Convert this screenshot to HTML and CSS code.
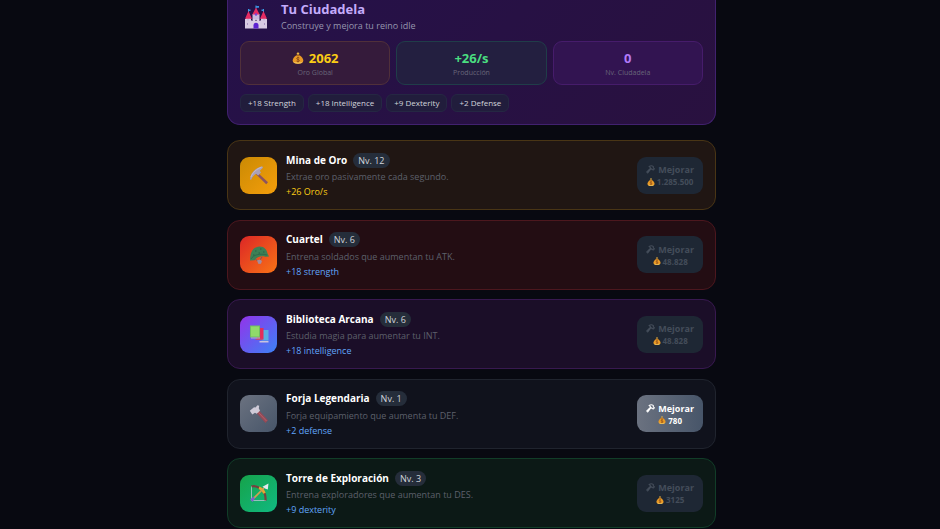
FILE: index.html
```html
<!DOCTYPE html>
<html lang="es">
<head>
<meta charset="utf-8">
<meta name="viewport" content="width=device-width, initial-scale=1">
<title>Tu Ciudadela</title>
<link rel="stylesheet" href="styles.css">
</head>
<body>
<svg class="defs" aria-hidden="true">
  <symbol id="bag" viewBox="0 0 12 12">
    <path d="M4.600 1.200 6 .2l1.400 1-.5 1.600H5.100z" fill="#e9b544"/>
    <path d="M4.700 3h2.600C9.500 4.300 11.300 6.500 11.300 8.600 11.300 10.800 9.500 11.800 6 11.800S.7 10.800.7 8.600C.7 6.500 2.500 4.300 4.700 3z" fill="#e99a26"/>
    <path d="M1.200 9.600c1.800 1.200 7.800 1.200 9.600 0-.7 1.600-2.400 2.200-4.800 2.200s-4.100-.6-4.800-2.200z" fill="#f3c75c"/>
    <path d="M4 3.300h4" stroke="#9c5a1b" stroke-width="1"/>
    <path d="M7.400 6C6.800 5.300 4.800 5.300 4.700 6.500c0 1.200 2.700.8 2.700 2.100 0 1.200-2.200 1.200-2.900.4M6 4.700v5.600" fill="none" stroke="#8a4a19" stroke-width=".9"/>
  </symbol>
  <symbol id="tools" viewBox="0 0 10 10">
    <path d="M3.500 1.500C5 .6 6.800.6 8 1.500l.2 1.800 1.100 1L7.900 5.700 6.300 4.300 5.300 4.500 4.800 2.800zM5.300 4.300 1.900 8.800.8 7.800l3.700-3.700" fill="none" stroke="currentColor" stroke-width="1.200"/>
  </symbol>
</svg>
<main class="page">
  <header class="hero">
    <div class="hero-head">
      <svg class="castle" viewBox="0 0 24 24" aria-hidden="true">
        <path d="M12 .5v3M4.500 4v3M19.500 4v3" stroke="#39a9e8" stroke-width="1"/>
        <path d="M12 1h3v1.800h-3zM4.500 4.500h2v1.500h-2zM17.500 4.500h2v1.500h-2z" fill="#3b8fe0"/>
        <path d="M8.500 9h7v6h-7zM2 12.500h5V16H2zM17 12.500h5V16h-5z" fill="#c9b8dc"/>
        <path d="M12 2.500 15.700 9.500H8.300zM4.500 6 8 13.800H1zM19.500 6 23 13.800h-7z" fill="#e52b62"/>
        <path d="M1 14h2v1.500h2V14h2v1.500h2V14h2v1.500h2V14h2v1.500h2V14h2v1.500h2V14h2v9.500H1z" fill="#d8cbe3"/>
        <path d="M9.500 23.500v-3.200a2.500 2.500 0 0 1 5 0v3.200z" fill="#5c22cf"/>
        <circle cx="12" cy="9.500" r="1.200" fill="#7a42d8"/>
        <path d="M3.500 18v2M20.500 18v2" stroke="#a994c2"/>
      </svg>
      <div>
        <h1 class="hero-title">Tu Ciudadela</h1>
        <p class="hero-sub">Construye y mejora tu reino idle</p>
      </div>
    </div>
    <div class="stats">
      <div class="stat stat-gold">
        <strong class="stat-value"><svg class="bag-lg" aria-hidden="true"><use href="#bag"/></svg>2062</strong>
        <span class="stat-label">Oro Global</span>
      </div>
      <div class="stat stat-green">
        <strong class="stat-value">+26/s</strong>
        <span class="stat-label">Producción</span>
      </div>
      <div class="stat stat-purple">
        <strong class="stat-value">0</strong>
        <span class="stat-label">Nv. Ciudadela</span>
      </div>
    </div>
    <ul class="chips">
      <li class="chip">+18 Strength</li>
      <li class="chip">+18 Intelligence</li>
      <li class="chip">+9 Dexterity</li>
      <li class="chip">+2 Defense</li>
    </ul>
  </header>

  <section class="buildings" aria-label="Edificios">
    <article class="card mine">
      <div class="tile">
        <svg class="glyph" viewBox="0 0 20 20" aria-hidden="true">
          <path d="M8.500 7.500 19 17.300 17.200 19.200 7 9.200z" fill="#8c5360"/>
          <path d="M1 14.500C1.200 9 5.500 3.200 13.200 1.200L14 2.700 10.800 5.800 12 7.600 9.200 10.400 7 8.800C4.800 10.200 3.300 12 2.200 14.800z" fill="#aaa0b8"/>
          <path d="M2 12C3.500 7.500 7.500 4 12.500 2.300" fill="none" stroke="#c8c0d2" stroke-width=".8"/>
        </svg>
      </div>
      <div class="info">
        <div class="name-row"><h2 class="name">Mina de Oro</h2><span class="level">Nv. 12</span></div>
        <p class="desc">Extrae oro pasivamente cada segundo.</p>
        <p class="bonus">+26 Oro/s</p>
      </div>
      <button class="upgrade" type="button" disabled>
        <span class="action"><svg class="tools" aria-hidden="true"><use href="#tools"/></svg>Mejorar</span>
        <span class="price"><svg class="bag" aria-hidden="true"><use href="#bag"/></svg>1.285.500</span>
      </button>
    </article>

    <article class="card barracks">
      <div class="tile">
        <svg class="glyph" viewBox="0 0 20 20" aria-hidden="true">
          <path d="M6 13.500 9 16.500M13 12l-3 4.500" stroke="#6f5b62" stroke-width="1"/>
          <path d="M8 15.500l3-1 2 1.500-1 2.700-2.500.3z" fill="#a58b9b"/>
          <path d="M1 15.500C1 7 4 2 10.500 1.500 15.500 1.500 18 5 18.500 8.500L20 11.500 16.500 11.800C12 10.500 8 12 5.500 15.200z" fill="#3d8055"/>
          <path d="M2 14C4 10 11 8 18 10" fill="none" stroke="#29624a" stroke-width=".7"/>
          <path d="M6 5.500h1.500v1H6zM11 3.500h1.500v1H11zM4 9.500h1.500v1H4zM14 6.500h1.500v1H14zM9.500 7.500H11v1H9.500z" fill="#286047"/>
        </svg>
      </div>
      <div class="info">
        <div class="name-row"><h2 class="name">Cuartel</h2><span class="level">Nv. 6</span></div>
        <p class="desc">Entrena soldados que aumentan tu ATK.</p>
        <p class="bonus">+18 strength</p>
      </div>
      <button class="upgrade" type="button" disabled>
        <span class="action"><svg class="tools" aria-hidden="true"><use href="#tools"/></svg>Mejorar</span>
        <span class="price"><svg class="bag" aria-hidden="true"><use href="#bag"/></svg>48.828</span>
      </button>
    </article>

    <article class="card library">
      <div class="tile">
        <svg class="glyph" viewBox="0 0 20 20" aria-hidden="true">
          <path d="M12.500 6h7v10.500h-7z" fill="#59aee0"/>
          <path d="M10.500 17h9v1.500h-9z" fill="#c9c3df"/>
          <path d="M8 4h6.500v11.500H8z" fill="#e32d59"/>
          <path d="M6.500 14.500h7v1.500h-7z" fill="#bd4a77"/>
          <path d="M1 1.500h10v12H1z" fill="#71bd60"/>
          <path d="M2 2.500h8v10H2z" fill="#90da69"/>
          <path d="M2 13.500h9v1H2z" fill="#b5b2c9"/>
        </svg>
      </div>
      <div class="info">
        <div class="name-row"><h2 class="name">Biblioteca Arcana</h2><span class="level">Nv. 6</span></div>
        <p class="desc">Estudia magia para aumentar tu INT.</p>
        <p class="bonus">+18 intelligence</p>
      </div>
      <button class="upgrade" type="button" disabled>
        <span class="action"><svg class="tools" aria-hidden="true"><use href="#tools"/></svg>Mejorar</span>
        <span class="price"><svg class="bag" aria-hidden="true"><use href="#bag"/></svg>48.828</span>
      </button>
    </article>

    <article class="card forge">
      <div class="tile">
        <svg class="glyph" viewBox="0 0 20 20" aria-hidden="true">
          <path d="M7 8.500 9.500 6 19 16.200 16.500 19z" fill="#954956"/>
          <path d="M9 8 17.500 17" stroke="#b86a70" stroke-width=".8"/>
          <path d="M.8 6.800 5 3.200 6.500 3.500 8.500 1.200 10.200 1.800 9.800 4.200 11 6.700 7.700 9.700 6 8.700 3.300 10.500z" fill="#cfcbd8"/>
        </svg>
      </div>
      <div class="info">
        <div class="name-row"><h2 class="name">Forja Legendaria</h2><span class="level">Nv. 1</span></div>
        <p class="desc">Forja equipamiento que aumenta tu DEF.</p>
        <p class="bonus">+2 defense</p>
      </div>
      <button class="upgrade" type="button">
        <span class="action"><svg class="tools" aria-hidden="true"><use href="#tools"/></svg>Mejorar</span>
        <span class="price"><svg class="bag" aria-hidden="true"><use href="#bag"/></svg>780</span>
      </button>
    </article>

    <article class="card tower">
      <div class="tile">
        <svg class="glyph" viewBox="0 0 20 20" aria-hidden="true">
          <path d="M2.500 3v14.500H17" fill="none" stroke="#b5c6cf" stroke-width=".8"/>
          <path d="M2.500 3.500C6 2 9 4 11.500 5.500 15 8 17 12 16.500 17.500" fill="none" stroke="#77403e" stroke-width="2.200"/>
          <path d="M10 4.800c2.500.8 4.500 3 5.500 5.400" fill="none" stroke="#e3a833" stroke-width="2.500"/>
          <path d="M3 17 15 5" stroke="#d3a052" stroke-width="1.700"/>
          <path d="M19.500.5 18.800 6.500 16.500 5.800 13.500 3.800z" fill="#e4e8ee"/>
          <path d="M1 16.500 4.500 13.500 6 15.500 3.500 19z" fill="#7b63c8"/>
        </svg>
      </div>
      <div class="info">
        <div class="name-row"><h2 class="name">Torre de Exploración</h2><span class="level">Nv. 3</span></div>
        <p class="desc">Entrena exploradores que aumentan tu DES.</p>
        <p class="bonus">+9 dexterity</p>
      </div>
      <button class="upgrade" type="button" disabled>
        <span class="action"><svg class="tools" aria-hidden="true"><use href="#tools"/></svg>Mejorar</span>
        <span class="price"><svg class="bag" aria-hidden="true"><use href="#bag"/></svg>3125</span>
      </button>
    </article>
  </section>
</main>
</body>
</html>
```
FILE: styles.css
```css
* { box-sizing: border-box; }
body {
  margin: 0;
  padding-left: 3px;
  background: #080911;
  color: #fff;
  font-family: "Open Sans", "Noto Sans", sans-serif;
  font-size: 9px;
  line-height: 15px;
}
h1, h2, p, ul { margin: 0; padding: 0; }
.defs { display: none; }
.page {
  display: flex;
  flex-direction: column;
  gap: 15px;
  width: 100%;
  max-width: 489px;
  min-height: 100vh;
  margin: 0 auto;
  padding-bottom: 1px;
}
.hero {
  padding: 0 12px 12px;
  border: 1px solid #41216f;
  border-top: 0;
  border-radius: 0 0 13px 13px;
  background: linear-gradient(135deg, #251149, #29113f);
}
.hero-head { display: flex; align-items: center; gap: 13px; height: 33px; padding-left: 4px; }
.castle { display: block; width: 24px; height: 24px; }
.hero-title { font-size: 13px; line-height: 18px; font-weight: 700; color: #c4abfb; }
.hero-sub { font-size: 9px; line-height: 15px; color: #9696ae; }
.stats { display: grid; grid-template-columns: repeat(3, 1fr); gap: 6px; margin-top: 8px; }
.stat {
  display: flex;
  flex-direction: column;
  align-items: center;
  padding: 7px 6px 5px;
  border: 1px solid;
  border-radius: 9px;
}
.stat-value { display: flex; align-items: center; gap: 5px; font-size: 13px; line-height: 18px; }
.stat-label { font-size: 7px; line-height: 12px; color: #686579; }
.stat-gold { background: #351b3b; border-color: #50303a; }
.stat-gold .stat-value { color: #facc15; }
.stat-green { background: #231f40; border-color: #203d49; }
.stat-green .stat-value { color: #4ade80; }
.stat-purple { background: #321451; border-color: #461c6b; }
.stat-purple .stat-value { color: #b27af8; }
.bag-lg { width: 12px; height: 12px; }
.chips { display: flex; gap: 4px; margin-top: 9px; list-style: none; }
.chip {
  padding: 0 7px;
  border: 1px solid #252743;
  border-radius: 6px;
  background: #211d3c;
  color: #d1d5db;
  font-size: 8px;
  line-height: 16px;
}
.buildings { display: flex; flex: 1; flex-direction: column; justify-content: space-between; gap: 9px; }
.card {
  display: flex;
  align-items: center;
  gap: 9px;
  padding: 10px 12px;
  border: 1px solid;
  border-radius: 13px;
}
.tile { display: grid; place-items: center; width: 37px; height: 37px; border-radius: 9px; }
.glyph { width: 20px; height: 20px; }
.info { flex: 1; min-width: 0; }
.name-row { display: flex; align-items: center; gap: 6px; height: 18px; }
.name { font-size: 10px; line-height: 15px; font-weight: 700; }
.level { padding: 0 5px; border-radius: 8px; background: #252d3a; color: #d1d5db; font-size: 9px; line-height: 15px; }
.desc { line-height: 15px; color: #5d606b; }
.bonus { line-height: 15px; color: #60a5fa; }
.upgrade {
  display: flex;
  flex-direction: column;
  align-items: center;
  justify-content: center;
  min-width: 65px;
  height: 37px;
  padding: 0 9px;
  border: 0;
  border-radius: 9px;
  background: linear-gradient(90deg, #6b7280, #475569);
  color: #fff;
  font: inherit;
  font-weight: 700;
}
.upgrade:disabled { background: #1e2734; color: #444d5a; }
.action, .price { display: flex; align-items: center; gap: 2px; }
.action { gap: 3px; font-size: 9px; line-height: 13px; }
.price { font-size: 8px; line-height: 11px; }
.tools { width: 9px; height: 9px; }
.bag { width: 8px; height: 8px; }
.mine { background: #201613; border-color: #493515; }
.mine .tile { background: linear-gradient(135deg, #ca8a04, #f59e0b); }
.mine .bonus { color: #facc15; }
.barracks { background: #230d13; border-color: #4c171e; }
.barracks .tile { background: linear-gradient(135deg, #dc2626, #f97316); }
.library { background: #1b0e28; border-color: #381950; }
.library .tile { background: linear-gradient(135deg, #9333ea, #3b82f6); }
.forge { background: #10121c; border-color: #20242e; }
.forge .tile { background: linear-gradient(135deg, #6b7280, #475569); }
.tower { background: #0c1916; border-color: #113d28; }
.tower .tile { background: linear-gradient(135deg, #16a34a, #10b981); }
```
